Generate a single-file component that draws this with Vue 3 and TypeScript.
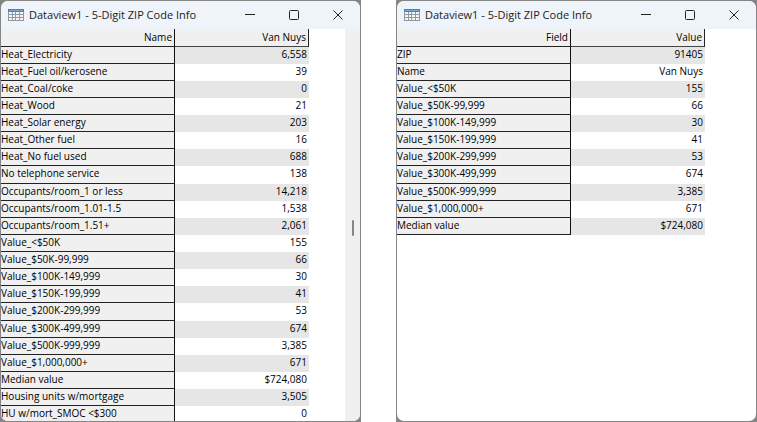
<script setup lang="ts">
interface Row {
  label: string
  value: string
}

interface DataWindow {
  id: string
  title: string
  labelHeading: string
  valueHeading: string
  scrollable: boolean
  rows: Row[]
}

const valueBands: Row[] = [
  { label: 'Value_<$50K', value: '155' },
  { label: 'Value_$50K-99,999', value: '66' },
  { label: 'Value_$100K-149,999', value: '30' },
  { label: 'Value_$150K-199,999', value: '41' },
  { label: 'Value_$200K-299,999', value: '53' },
  { label: 'Value_$300K-499,999', value: '674' },
  { label: 'Value_$500K-999,999', value: '3,385' },
  { label: 'Value_$1,000,000+', value: '671' },
  { label: 'Median value', value: '$724,080' },
]

const windows: DataWindow[] = [
  {
    id: 'full',
    title: 'Dataview1 - 5-Digit ZIP Code Info',
    labelHeading: 'Name',
    valueHeading: 'Van Nuys',
    scrollable: true,
    rows: [
      { label: 'Heat_Electricity', value: '6,558' },
      { label: 'Heat_Fuel oil/kerosene', value: '39' },
      { label: 'Heat_Coal/coke', value: '0' },
      { label: 'Heat_Wood', value: '21' },
      { label: 'Heat_Solar energy', value: '203' },
      { label: 'Heat_Other fuel', value: '16' },
      { label: 'Heat_No fuel used', value: '688' },
      { label: 'No telephone service', value: '138' },
      { label: 'Occupants/room_1 or less', value: '14,218' },
      { label: 'Occupants/room_1.01-1.5', value: '1,538' },
      { label: 'Occupants/room_1.51+', value: '2,061' },
      ...valueBands,
      { label: 'Housing units w/mortgage', value: '3,505' },
      { label: 'HU w/mort_SMOC <$300', value: '0' },
    ],
  },
  {
    id: 'values',
    title: 'Dataview1 - 5-Digit ZIP Code Info',
    labelHeading: 'Field',
    valueHeading: 'Value',
    scrollable: false,
    rows: [{ label: 'ZIP', value: '91405' }, { label: 'Name', value: 'Van Nuys' }, ...valueBands],
  },
]
</script>

<template>
  <main class="desktop">
    <div v-for="win in windows" :key="win.id" class="frame">
      <section class="window">
        <header class="titlebar">
          <svg class="app-icon" viewBox="0 0 16 12" aria-hidden="true">
            <rect width="16" height="12" fill="#8c9aa8" />
            <rect width="16" height="3" fill="#4d83bd" />
            <rect x="1" y="1" width="14" height="1" fill="#76a5d5" />
            <g fill="#f8f6ef">
              <path d="M1 3h3v2H1zM5 3h2v2H5zM8 3h3v2H8zM12 3h3v2h-3z" />
              <path d="M1 6h3v2H1zM5 6h2v2H5zM8 6h3v2H8zM12 6h3v2h-3z" />
              <path d="M1 9h3v2H1zM5 9h2v2H5zM8 9h3v2H8zM12 9h3v2h-3z" />
            </g>
          </svg>
          <h1>{{ win.title }}</h1>
          <div class="controls">
            <button type="button" aria-label="Minimize">
              <svg viewBox="0 0 10 10"><path d="M0 4.5h10" /></svg>
            </button>
            <button type="button" aria-label="Maximize">
              <svg viewBox="0 0 10 10"><rect x=".5" y=".5" width="9" height="9" rx="1" /></svg>
            </button>
            <button type="button" aria-label="Close">
              <svg viewBox="0 0 10 10"><path d="M.5.5l9 9M9.5.5l-9 9" /></svg>
            </button>
          </div>
        </header>
        <div class="content">
          <table>
            <thead>
              <tr>
                <th scope="col" class="label">{{ win.labelHeading }}</th>
                <th scope="col" class="value">{{ win.valueHeading }}</th>
              </tr>
            </thead>
            <tbody>
              <tr v-for="row in win.rows" :key="row.label">
                <th scope="row" class="label">{{ row.label }}</th>
                <td class="value">{{ row.value }}</td>
              </tr>
            </tbody>
          </table>
          <div v-if="win.scrollable" class="scrollbar"><div class="thumb"></div></div>
        </div>
      </section>
    </div>
  </main>
</template>

<style>
body {
  background: #fff;
}
</style>

<style scoped>
.desktop {
  display: grid;
  grid-template-columns: 1fr 1fr;
  gap: 35px;
  height: 100vh;
  overflow: hidden;
}

.frame {
  min-width: 0;
  min-height: 0;
  padding: 1px;
  background: #858585;
}

.window {
  display: flex;
  flex-direction: column;
  height: 100%;
  overflow: hidden;
  background: #fff;
  border-radius: 7px;
}

.titlebar {
  display: flex;
  flex: none;
  align-items: center;
  height: 28px;
  padding: 0 8px 0 7px;
  background: #eef4f9;
  color: #1b1b1b;
}

.app-icon {
  flex: none;
  width: 16px;
  height: 12px;
}

h1 {
  flex: 1;
  margin: 0 0 0 5px;
  font: 400 11px/16px 'Open Sans', sans-serif;
  white-space: nowrap;
}

.controls {
  display: flex;
  gap: 16px;
}

button {
  display: grid;
  place-items: center;
  width: 28px;
  height: 28px;
  padding: 0;
  border: 0;
  background: none;
}

button svg {
  width: 10px;
  height: 10px;
  fill: none;
  stroke: #222;
}

.content {
  display: flex;
  flex: 1;
  align-items: flex-start;
  justify-content: space-between;
  min-height: 0;
}

table {
  border-collapse: separate;
  border-spacing: 0;
  color: #000;
  font: 400 10px/14px 'Open Sans', sans-serif;
  white-space: nowrap;
}

th,
td {
  box-sizing: border-box;
  height: 17px;
  padding: 0 2px 0 0;
  font-weight: 400;
  text-align: right;
  vertical-align: top;
}

.label {
  width: 174px;
  border-right: 1px solid #111;
  border-bottom: 1px solid #222;
  background: #f0f0f0;
}

.value {
  width: 134px;
}

thead th {
  height: 18px;
  padding-top: 1px;
}

thead .value {
  border-right: 1px solid #222;
  border-bottom: 1px solid #444;
  background: #f0f0f0;
}

tbody .label {
  text-align: left;
}

tbody tr:nth-child(odd) .value {
  background: #e6e6e6;
}

tbody tr:nth-child(8n) > * {
  height: 18px;
}

.scrollbar {
  display: flex;
  align-items: center;
  justify-content: center;
  align-self: stretch;
  box-sizing: border-box;
  width: 15px;
  padding-top: 6px;
  background: #f0f0f0;
}

.thumb {
  width: 2px;
  height: 16px;
  border-radius: 1px;
  background: #858585;
}
</style>
